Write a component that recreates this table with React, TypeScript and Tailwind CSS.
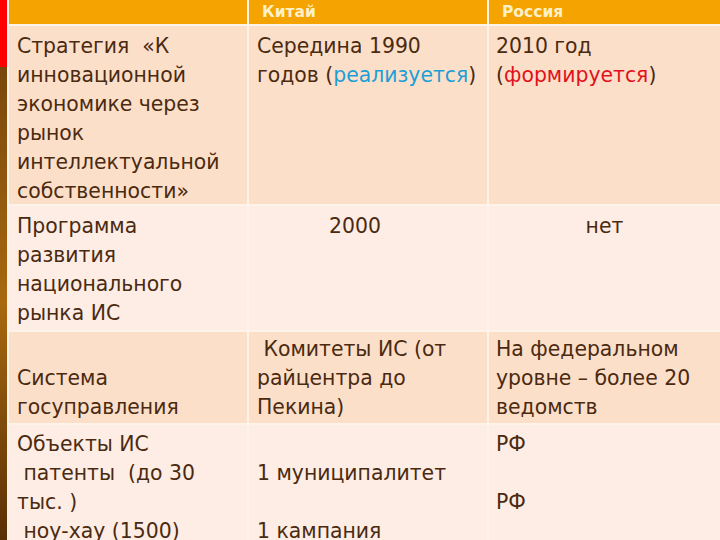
import React from 'react';

const font = { fontFamily: '"DejaVu Sans", Verdana, sans-serif' };

const Cell = ({ tone, className = '', children }: { tone: 'peach' | 'light'; className?: string; children: React.ReactNode }) => (
  <div className={`${tone === 'peach' ? 'bg-[#fcdfc9]' : 'bg-[#fdede4]'} overflow-hidden text-[20.4px] leading-[29px] text-[#4a2a10] whitespace-pre ${className}`}>
    {children}
  </div>
);

export default function App() {
  return (
    <div className="flex h-[540px] w-[720px] overflow-hidden bg-[#fdf3e8]" style={font}>
      {/* left accent strip */}
      <div className="flex w-[7px] flex-col">
        <div className="h-[67px] bg-[#ff0000]" />
        <div className="flex-1 bg-gradient-to-b from-[#7a470b] via-[#a8690f] to-[#5a2f06]" />
      </div>

      <div className="ml-[2px] grid flex-1 grid-cols-[238px_238px_1fr] grid-rows-[24px_178px_124px_91px_1fr] gap-[2px]">
        {/* header */}
        <div className="bg-[#f5a300]" />
        <div className="bg-[#f5a300] pl-[13px] text-[15.5px] font-bold leading-[24px] text-[#fdf0c8]">Китай</div>
        <div className="bg-[#f5a300] pl-[13px] text-[15.5px] font-bold leading-[24px] text-[#fdf0c8]">Россия</div>

        {/* row 1 */}
        <Cell tone="peach" className="pl-[8px] pt-[6px]">
          {'Стратегия  «К\nинновационной\nэкономике через\nрынок\nинтеллектуальной\nсобственности»'}
        </Cell>
        <Cell tone="peach" className="pl-[8px] pt-[6px]">
          {'Середина 1990\nгодов ('}
          <span className="text-[#1c9fd6]">реализуется</span>
          {')'}
        </Cell>
        <Cell tone="peach" className="pl-[7px] pt-[6px]">
          {'2010 год\n('}
          <span className="text-[#e0121c]">формируется</span>
          {')'}
        </Cell>

        {/* row 2 */}
        <Cell tone="light" className="pl-[8px] pt-[6px]">
          {'Программа\nразвития\nнационального\nрынка ИС'}
        </Cell>
        <Cell tone="light" className="pr-[26px] pt-[6px] text-center">2000</Cell>
        <Cell tone="light" className="pt-[6px] text-center">нет</Cell>

        {/* row 3 */}
        <Cell tone="peach" className="pl-[8px] pt-[3px]">
          {'\nСистема\nгосуправления'}
        </Cell>
        <Cell tone="peach" className="pl-[8px] pt-[3px]">
          {' Комитеты ИС (от\nрайцентра до\nПекина)'}
        </Cell>
        <Cell tone="peach" className="pl-[7px] pt-[3px]">
          {'На федеральном\nуровне – более 20\nведомств'}
        </Cell>

        {/* row 4 */}
        <Cell tone="light" className="pl-[8px] pt-[5px]">
          {'Объекты ИС\n патенты  (до 30\nтыс. )\n ноу-хау (1500)'}
        </Cell>
        <Cell tone="light" className="pl-[8px] pt-[5px]">
          {'\n1 муниципалитет\n\n1 кампания'}
        </Cell>
        <Cell tone="light" className="pl-[7px] pt-[5px]">
          {'РФ\n\nРФ'}
        </Cell>
      </div>
    </div>
  );
}
